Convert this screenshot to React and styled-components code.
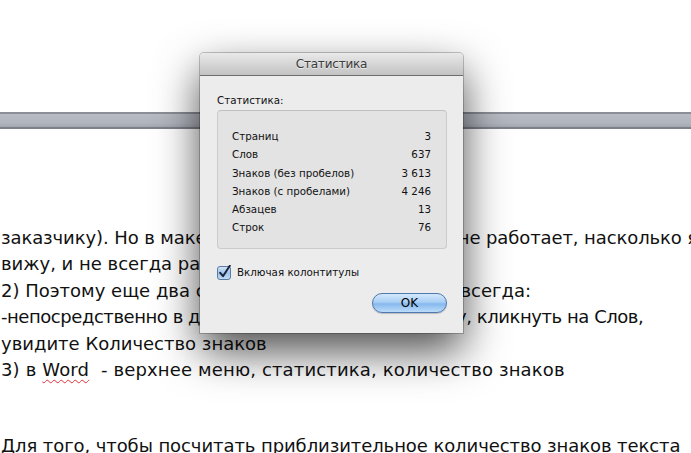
import React from 'react';
import styled, { createGlobalStyle } from 'styled-components';

const GlobalStyle = createGlobalStyle`
    html, body {
        margin: 0;
        padding: 0;
        background: #ffffff;
    }
    #root {
        width: 691px;
        height: 453px;
    }
`

const Page = styled.div`
    position: relative;
    width: 691px;
    height: 453px;
    overflow: hidden;
    background: #ffffff;
    padding-top: 112px;
    box-sizing: border-box;
`

const PageBreak = styled.div`
    height: 17px;
    box-sizing: border-box;
    border-top: 2px solid #8b8e96;
    border-bottom: 2px solid #7d8088;
    background: linear-gradient(#b7bbc3, #b1b5be 70%, #a3a7b0);
`

const DocText = styled.div`
    margin-top: 96px;
    padding-left: 1px;
    font-family: "DejaVu Sans", Verdana, sans-serif;
    font-size: 18px;
    line-height: 26.4px;
    color: #111111;
    white-space: nowrap;
`

const Line = styled.div`
    margin-top: ${p => p.$gap || 0}px;
    min-height: 26.4px;
    letter-spacing: ${p => p.$track || 0}px;
`

const Misspelled = styled.span`
    text-decoration: underline wavy #e0303a;
    text-decoration-thickness: 1px;
    text-underline-offset: 3px;
`

const Window = styled.div`
    position: absolute;
    left: 200px;
    top: 53px;
    width: 263px;
    height: 280px;
    background: #ececec;
    border-radius: 4px 4px 0 0;
    box-shadow: 0 18px 44px rgba(0, 0, 0, 0.7), 0 0 0 1px rgba(0, 0, 0, 0.22);
    font-family: "DejaVu Sans", "Lucida Grande", sans-serif;
    color: #111111;
    display: flex;
    flex-direction: column;
`

const TitleBar = styled.div`
    height: 23px;
    box-sizing: border-box;
    border-bottom: 1px solid #6e6e6e;
    border-radius: 4px 4px 0 0;
    background: linear-gradient(#e9e9e9, #d4d4d4 55%, #c3c3c3);
    display: flex;
    align-items: center;
    justify-content: center;
    font-size: 12px;
    letter-spacing: -0.2px;
    color: #3a3a3a;
    text-shadow: 0 1px 0 rgba(255, 255, 255, 0.6);
`

const Body = styled.div`
    flex: 1;
    padding: 18px 16px 19px 17px;
    display: flex;
    flex-direction: column;
    font-size: 10.3px;
`

const GroupLabel = styled.div`
    height: 13px;
    line-height: 13px;
    margin-bottom: 3px;
`

const GroupBox = styled.div`
    height: 139px;
    box-sizing: border-box;
    border: 1px solid #cbcbcb;
    border-top-color: #c0c0c0;
    border-radius: 4px;
    background: #e3e3e3;
    padding: 16px 15px 0 14px;
`

const StatRow = styled.div`
    display: flex;
    justify-content: space-between;
    height: 18.3px;
    line-height: 18.3px;
`

const CheckRow = styled.label`
    display: flex;
    align-items: center;
    gap: 5px;
    margin-top: 16px;
    height: 14px;
`

const ButtonRow = styled.div`
    display: flex;
    justify-content: flex-end;
    margin-top: 14px;
`

const OkButton = styled.button`
    width: 75px;
    height: 20px;
    border: 1px solid #4f77b0;
    border-radius: 10px;
    background: linear-gradient(#d4e8fc, #a9cff5 45%, #86b9ee 55%, #bcdcfa);
    box-shadow: 0 1px 1px rgba(0, 0, 0, 0.2);
    font-family: "DejaVu Sans", "Lucida Grande", sans-serif;
    font-size: 12px;
    color: #000000;
    padding: 0;
`

const CheckIcon = () => (
    <svg width="15" height="15" viewBox="0 0 15 15">
        <defs>
            <linearGradient id="cbg" x1="0" y1="0" x2="0" y2="1">
                <stop offset="0" stopColor="#d6e7f8" />
                <stop offset="0.5" stopColor="#9cc3eb" />
                <stop offset="1" stopColor="#c4dcf5" />
            </linearGradient>
        </defs>
        <rect x="0.5" y="1.5" width="13" height="13" rx="2.5" fill="url(#cbg)" stroke="#5a79a3" />
        <path d="M3.2 7.8 L6 11.2 L12.8 0.8" fill="none" stroke="#1d2440" strokeWidth="2" strokeLinecap="round" strokeLinejoin="round" />
    </svg>
)

const stats = [
    ['Страниц', '3'],
    ['Слов', '637'],
    ['Знаков (без пробелов)', '3 613'],
    ['Знаков (с пробелами)', '4 246'],
    ['Абзацев', '13'],
    ['Строк', '76'],
]

const App = () => {
    return (
        <Page>
            <GlobalStyle />
            <PageBreak />
            <DocText>
                <Line $track={-0.1}>заказчику). Но в маке (в Pages) этот способ увы не работает, насколько я</Line>
                <Line>вижу, и не всегда работает правильно.</Line>
                <Line>2) Поэтому еще два способа которые работают всегда:</Line>
                <Line $track={-0.45}>-непосредственно в документе внизу в левом углу, кликнуть на Слов,</Line>
                <Line>увидите Количество знаков</Line>
                <Line $track={0.15}>3) в <Misspelled>Word</Misspelled>{'\u00a0\u00a0'}- верхнее меню, статистика, количество знаков</Line>
                <Line $gap={49.6} $track={-0.08}>Для того, чтобы посчитать приблизительное количество знаков текста</Line>
            </DocText>

            <Window>
                <TitleBar>Статистика</TitleBar>
                <Body>
                    <GroupLabel>Статистика:</GroupLabel>
                    <GroupBox>
                        {stats.map(([label, value]) => (
                            <StatRow key={label}>
                                <span>{label}</span>
                                <span>{value}</span>
                            </StatRow>
                        ))}
                    </GroupBox>
                    <CheckRow>
                        <CheckIcon />
                        <span>Включая колонтитулы</span>
                    </CheckRow>
                    <ButtonRow>
                        <OkButton>OK</OkButton>
                    </ButtonRow>
                </Body>
            </Window>
        </Page>
    );
};

export default App;
